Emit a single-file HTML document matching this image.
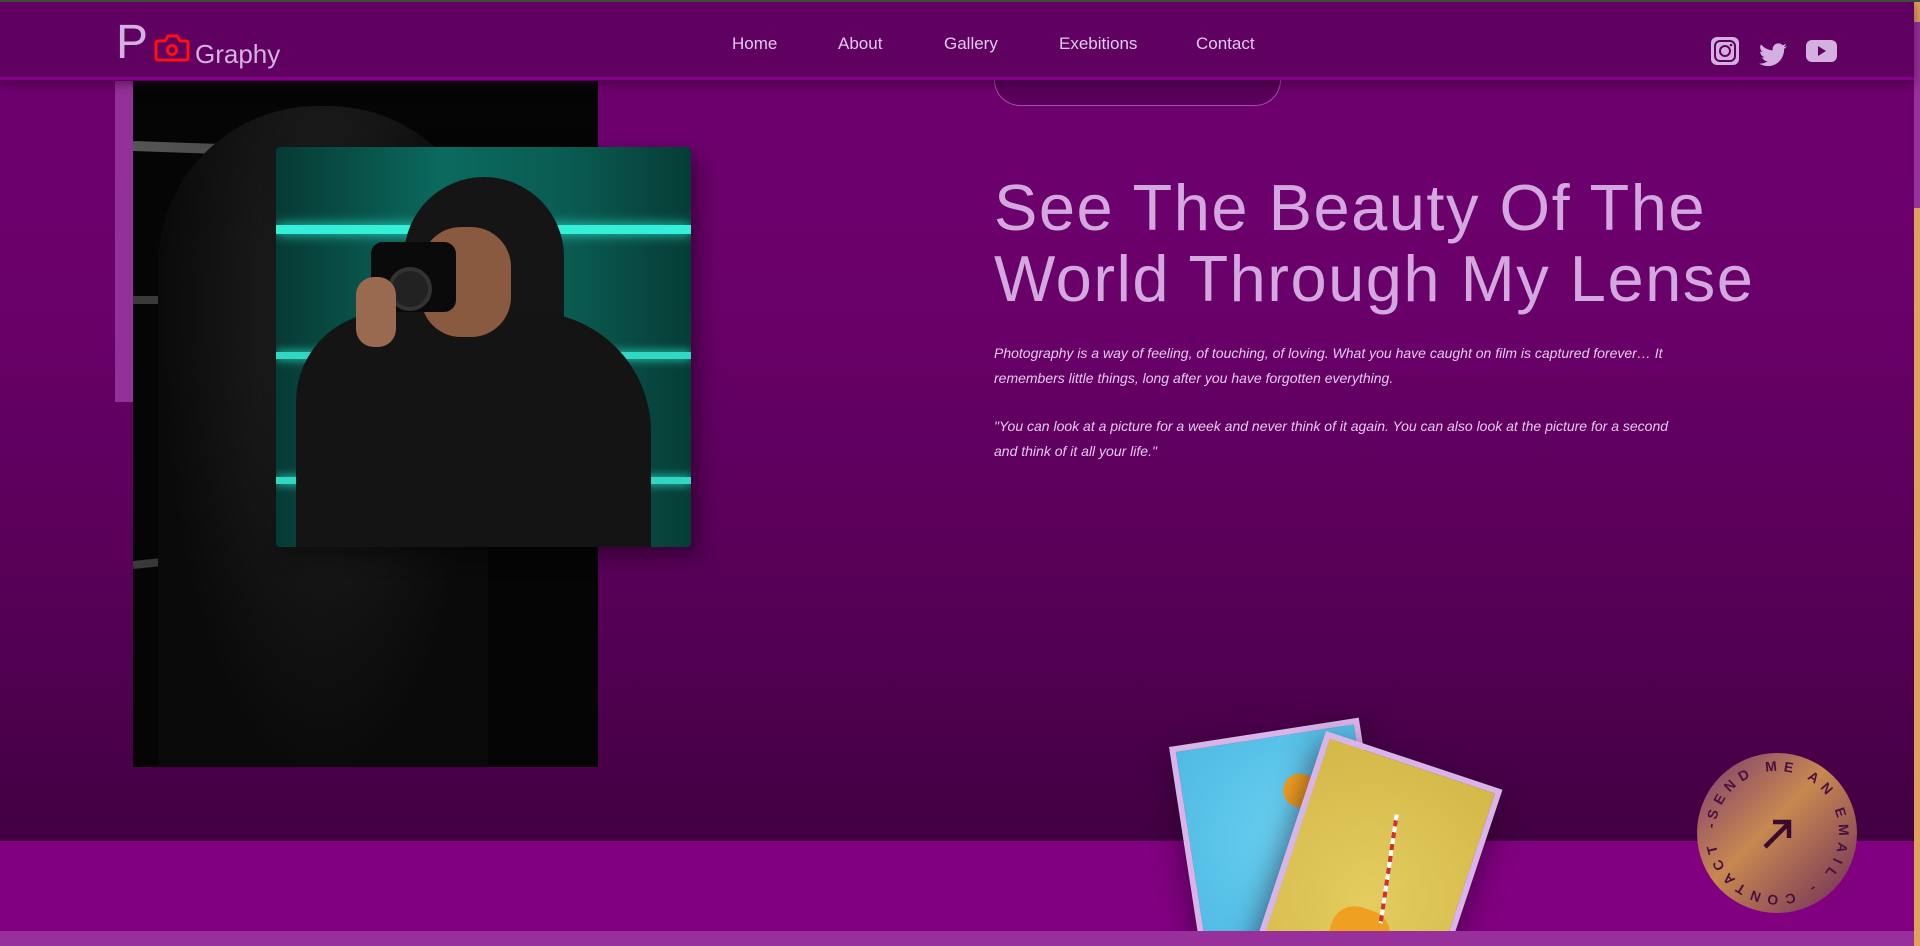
<!DOCTYPE html>
<html><head><meta charset="utf-8"><style>
*{margin:0;padding:0;box-sizing:border-box}
html,body{width:1920px;height:946px;overflow:hidden;font-family:"Liberation Sans",sans-serif}
body{position:relative;background:linear-gradient(#700070 0px,#6a006a 300px,#560056 600px,#420042 840px)}
.top{position:absolute;left:0;top:0;width:1920px;height:2px;background:#3d4a3d;z-index:6}
header{position:absolute;left:0;top:0;width:1914px;height:80px;background:#600060;border-bottom:3px solid #84008a;z-index:5;box-shadow:0 4px 10px rgba(40,0,40,.5)}
.logoP{position:absolute;left:116px;top:19px;font-size:48px;color:#d4b0e0;line-height:1}
.cam{position:absolute;left:154px;top:33px}
.gr{position:absolute;left:195px;top:39px;font-size:26px;color:#d4b0e0}
nav a{position:absolute;top:34px;font-size:17px;color:#e0c8ea;text-decoration:none}
.ic{position:absolute}
.strip{position:absolute;left:115px;top:81px;width:18px;height:321px;background:#94309a}
.dark{position:absolute;left:133px;top:81px;width:465px;height:686px;background:#050505;overflow:hidden}
.teal{position:absolute;left:276px;top:147px;width:415px;height:400px;border-radius:4px;overflow:hidden;background:linear-gradient(90deg,#063a34,#0b6a5e 40%,#0a5c52 70%,#063c36);box-shadow:8px 10px 20px rgba(0,0,0,.4)}
.pill{position:absolute;left:994px;top:60px;width:287px;height:46px;border:1px solid #a050a8;border-top:none;border-radius:0 0 26px 26px;background:#5a005a}
h1{position:absolute;left:994px;top:172px;font-weight:400;font-size:65px;line-height:71px;color:#d3a8de;letter-spacing:1.5px;width:900px}
p.t{position:absolute;left:994px;font-style:italic;font-size:14px;line-height:24.5px;color:#e6c8ee;width:700px}
.band{position:absolute;left:0;top:841px;width:1914px;height:90px;background:#800080}
.band2{position:absolute;left:0;top:931px;width:1914px;height:15px;background:#97309b}
.card{position:absolute;border:6px solid #d8b4e8;box-shadow:0 10px 30px rgba(30,0,30,.6)}
.sb{position:absolute;right:0;top:0;width:6px;height:946px;background:#e0a060}
.sbt{position:absolute;right:0;top:22px;width:6px;height:186px;background:#97309b}
</style></head><body>
<div class="top"></div>
<header>
<div class="logoP">P</div>
<svg class="cam" width="36" height="30" viewBox="0 0 36 30"><path d="M4 8h7l3-5h9l3 5h6a2 2 0 0 1 2 2v15a2 2 0 0 1-2 2H4a2 2 0 0 1-2-2V10a2 2 0 0 1 2-2z" fill="none" stroke="#ff1010" stroke-width="3"/><circle cx="18" cy="17" r="4.5" fill="none" stroke="#ff1010" stroke-width="3"/></svg>
<div class="gr">Graphy</div>
<nav><a style="left:732px">Home</a><a style="left:838px">About</a><a style="left:944px">Gallery</a><a style="left:1059px">Exebitions</a><a style="left:1196px">Contact</a></nav>
<svg class="ic" style="left:1711px;top:37px" width="28" height="28" viewBox="0 0 28 28"><rect x="0" y="0" width="28" height="28" rx="6" fill="#d4b0e0"/><rect x="4" y="4" width="20" height="20" rx="5" fill="none" stroke="#600060" stroke-width="2"/><circle cx="14" cy="14" r="5" fill="none" stroke="#600060" stroke-width="2"/><circle cx="20" cy="8" r="1.3" fill="#600060"/></svg>
<svg class="ic" style="left:1759px;top:43px" width="28" height="24" viewBox="0 0 24 20"><path d="M24 2.4a9.8 9.8 0 0 1-2.8.8A4.9 4.9 0 0 0 23.3.4a9.9 9.9 0 0 1-3.1 1.2A4.9 4.9 0 0 0 11.8 6 14 14 0 0 1 1.7.9a4.9 4.9 0 0 0 1.5 6.6A4.9 4.9 0 0 1 1 6.9a4.9 4.9 0 0 0 3.9 4.9 4.9 4.9 0 0 1-2.2.1 4.9 4.9 0 0 0 4.6 3.4A9.9 9.9 0 0 1 0 17.3 14 14 0 0 0 7.5 19.5c9.1 0 14-7.5 14-14v-.6A10 10 0 0 0 24 2.4z" fill="#d4b0e0"/></svg>
<svg class="ic" style="left:1806px;top:40px" width="31" height="22" viewBox="0 0 31 22"><rect width="31" height="22" rx="6" fill="#d4b0e0"/><path d="M12 6l8 5-8 5z" fill="#600060"/></svg>
</header>
<div class="strip"></div>
<div class="dark">
<div style="position:absolute;left:0;top:60px;width:465px;height:10px;background:linear-gradient(90deg,#555,#222);transform:rotate(2deg);transform-origin:left"></div>
<div style="position:absolute;left:0;top:215px;width:200px;height:8px;background:#3a3a3a"></div>
<div style="position:absolute;left:0;top:480px;width:465px;height:8px;background:linear-gradient(90deg,#3a3a3a,#1a1a1a 60%,#444);transform:rotate(-6deg);transform-origin:left"></div>
<div style="position:absolute;left:25px;top:25px;width:330px;height:680px;border-radius:160px 160px 0 0;background:radial-gradient(ellipse at 50% 30%,#222,#0a0a0a 70%)"></div>
</div>
<div class="teal">
<div style="position:absolute;left:0;top:78px;width:415px;height:9px;background:#35f0d8;box-shadow:0 0 12px #2fe0c8"></div>
<div style="position:absolute;left:0;top:205px;width:415px;height:7px;background:#30d8c4;box-shadow:0 0 10px #2fe0c8"></div>
<div style="position:absolute;left:0;top:330px;width:415px;height:7px;background:#30d8c4;box-shadow:0 0 10px #2fe0c8"></div>
<div style="position:absolute;left:128px;top:30px;width:160px;height:380px;border-radius:80px 80px 0 0;background:#151515"></div>
<div style="position:absolute;left:20px;top:165px;width:355px;height:260px;border-radius:90px 120px 0 0;background:#141414"></div>
<div style="position:absolute;left:145px;top:80px;width:90px;height:110px;border-radius:40px;background:#8a5a40"></div>
<div style="position:absolute;left:95px;top:95px;width:85px;height:70px;border-radius:12px;background:#0a0a0a"></div>
<div style="position:absolute;left:112px;top:120px;width:44px;height:44px;border-radius:50%;background:#222;border:4px solid #333"></div>
<div style="position:absolute;left:80px;top:130px;width:40px;height:70px;border-radius:18px;background:#9a6a50"></div>
</div>
<div class="pill"></div>
<h1>See The Beauty Of The World Through My Lense</h1>
<p class="t" style="top:341px">Photography is a way of feeling, of touching, of loving. What you have caught on film is captured forever… It remembers little things, long after you have forgotten everything.</p>
<p class="t" style="top:414px">"You can look at a picture for a week and never think of it again. You can also look at the picture for a second and think of it all your life."</p>
<div class="band"></div>
<div class="band2"></div>
<div style="position:absolute;left:0;top:0;width:1914px;height:931px;overflow:hidden;pointer-events:none">
<div class="card" style="left:1169px;top:747px;width:192px;height:270px;transform:rotate(-8.8deg);transform-origin:top left;background:radial-gradient(circle at 60% 40%,#6ad0f0,#48b4e0)">
<div style="position:absolute;left:100px;top:40px;width:34px;height:34px;border-radius:50%;background:#f0a020"></div>
<div style="position:absolute;left:115px;top:120px;width:30px;height:30px;border-radius:50%;background:#f09020"></div></div>
<div class="card" style="left:1326px;top:731px;width:186px;height:290px;transform:rotate(18.4deg);transform-origin:top left;background:radial-gradient(circle at 50% 50%,#e4cc60,#d4b848)">
<div style="position:absolute;left:60px;top:150px;width:60px;height:60px;border-radius:40%;background:#f0a020"></div>
<div style="position:absolute;left:95px;top:50px;width:4px;height:110px;background:repeating-linear-gradient(#fff 0 6px,#d03030 6px 12px);transform:rotate(-10deg)"></div></div>
</div>
<svg style="position:absolute;left:1695px;top:751px" width="164" height="164" viewBox="0 0 164 164">
<defs><linearGradient id="g" x1="0" y1="0" x2="1" y2="1"><stop offset="0" stop-color="#7a3870"/><stop offset=".45" stop-color="#c88850"/><stop offset="1" stop-color="#6a2a5a"/></linearGradient>
<path id="c" d="M82 82m-62 0a62 62 0 1 1 124 0a62 62 0 1 1-124 0"/></defs>
<circle cx="82" cy="82" r="80" fill="url(#g)"/>
<g transform="rotate(12 82 82)"><text font-family="Liberation Sans" font-size="14" font-weight="bold" fill="#4a1040"><textPath href="#c" startOffset="0" textLength="385" lengthAdjust="spacing">SEND ME AN EMAIL - CONTACT - </textPath></text></g>
<path d="M70 96L94 72M78 71h16v16" stroke="#3a0a30" stroke-width="4.5" fill="none"/>
</svg>
<div class="sb"></div><div class="sbt"></div>
</body></html>
